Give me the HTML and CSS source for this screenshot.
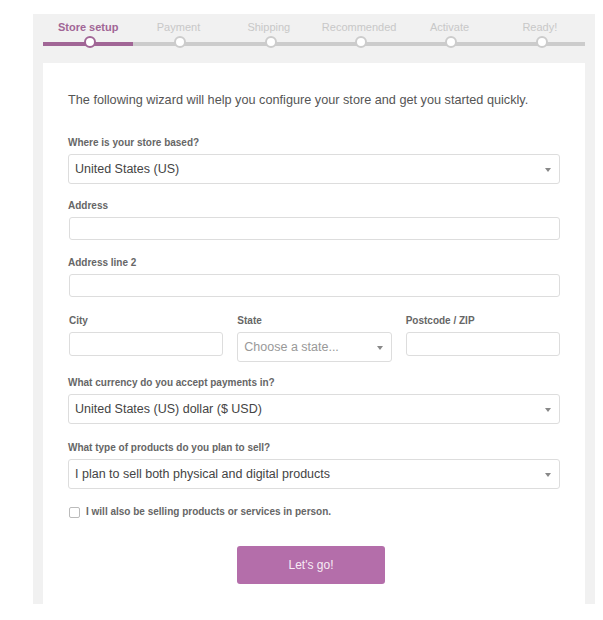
FILE: index.html
```html
<!DOCTYPE html>
<html lang="en">
<head>
<meta charset="utf-8">
<title>Store setup</title>
<link rel="stylesheet" href="styles.css">
</head>
<body>
<div class="setup">
  <ol class="steps">
    <li class="step active">Store setup</li>
    <li class="step">Payment</li>
    <li class="step">Shipping</li>
    <li class="step">Recommended</li>
    <li class="step">Activate</li>
    <li class="step">Ready!</li>
  </ol>
  <div class="card">
    <p class="intro">The following wizard will help you configure your store and get you started quickly.</p>

    <div class="field gap-16">
      <div class="label">Where is your store based?</div>
      <div class="select"><span class="value">United States (US)</span><span class="arrow"></span></div>
    </div>

    <div class="field gap-17">
      <div class="label">Address</div>
      <div class="input"></div>
    </div>

    <div class="field gap-18">
      <div class="label">Address line 2</div>
      <div class="input"></div>
    </div>

    <div class="field row gap-15">
      <div class="col">
        <div class="label">City</div>
        <div class="input short"></div>
      </div>
      <div class="col">
        <div class="label">State</div>
        <div class="select"><span class="value placeholder">Choose a state...</span><span class="arrow"></span></div>
      </div>
      <div class="col">
        <div class="label">Postcode / ZIP</div>
        <div class="input short"></div>
      </div>
    </div>

    <div class="field gap-18">
      <div class="label">What currency do you accept payments in?</div>
      <div class="select"><span class="value">United States (US) dollar ($ USD)</span><span class="arrow"></span></div>
    </div>

    <div class="field gap-17">
      <div class="label">What type of products do you plan to sell?</div>
      <div class="select"><span class="value">I plan to sell both physical and digital products</span><span class="arrow"></span></div>
    </div>

    <label class="check"><span class="box"></span><span class="check-text">I will also be selling products or services in person.</span></label>

    <div class="actions">
      <button class="go" type="button">Let's go!</button>
    </div>
  </div>
</div>
</body>
</html>
```

FILE: styles.css
```css
* { box-sizing: border-box; }

html, body {
  margin: 0;
  padding: 0;
  background: #ffffff;
}

body {
  font-family: "Liberation Sans", Arial, Helvetica, sans-serif;
  color: #555;
}

.setup {
  margin: 14px 0 0 33px;
  width: 562px;
  height: 590px;
  background: #f1f1f1;
  padding: 0 10px;
  display: flex;
  flex-direction: column;
  overflow: hidden;
}

.steps {
  list-style: none;
  margin: 0;
  padding: 0;
  display: grid;
  grid-template-columns: repeat(6, 1fr);
}

.step {
  position: relative;
  text-align: center;
  font-size: 11px;
  line-height: 14px;
  padding: 6px 0 8px;
  color: #c8c8c8;
  border-bottom: 4px solid #cccccc;
}

.step::before {
  content: "";
  position: absolute;
  left: 50%;
  bottom: -6px;
  margin-left: -4px;
  width: 8px;
  height: 8px;
  border: 2.5px solid #cccccc;
  border-radius: 50%;
  background: #ffffff;
}

.step.active {
  color: #a16696;
  font-weight: bold;
  border-bottom-color: #a16696;
}

.step.active::before {
  border-color: #a16696;
}

.card {
  flex: 1;
  margin-top: 17px;
  background: #ffffff;
  padding: 29px 25px 20px;
}

.intro {
  margin: 0 0 29px;
  font-size: 12.7px;
  line-height: 16px;
  color: #555;
}

.field { margin-bottom: 16px; }
.field.gap-15 { margin-bottom: 15px; }
.field.gap-16 { margin-bottom: 16px; }
.field.gap-17 { margin-bottom: 17px; }
.field.gap-18 { margin-bottom: 18px; }

.label {
  font-size: 10px;
  line-height: 12px;
  font-weight: bold;
  color: #666;
  margin-bottom: 5px;
}

.select {
  height: 30px;
  border: 1px solid #dddddd;
  border-radius: 3px;
  background: #ffffff;
  display: flex;
  align-items: center;
  justify-content: space-between;
  padding: 0 8px 0 6px;
}

.value {
  font-size: 12.5px;
  color: #444;
  white-space: nowrap;
}

.value.placeholder {
  color: #999;
}

.arrow {
  width: 0;
  height: 0;
  border-left: 3px solid transparent;
  border-right: 3px solid transparent;
  border-top: 4px solid #888;
  margin-top: 1px;
}

.input {
  height: 23px;
  border: 1px solid #dddddd;
  border-radius: 3px;
  background: #ffffff;
  margin-left: 1px;
}

.input.short {
  height: 24px;
}

.row {
  display: grid;
  grid-template-columns: repeat(3, 1fr);
  column-gap: 13px;
  align-items: start;
}

.row .col .label {
  margin-left: 1px;
}

.row .select {
  padding-left: 6px;
  margin-left: 1px;
}

.check {
  display: flex;
  align-items: center;
  gap: 6px;
  margin-left: 1px;
  height: 12px;
}

.box {
  width: 11px;
  height: 11px;
  border: 1px solid #bbbbbb;
  border-radius: 2px;
  background: #fff;
}

.check-text {
  font-size: 10px;
  font-weight: bold;
  color: #666;
  line-height: 12px;
}

.actions {
  margin-top: 28px;
  padding-left: 169px;
}

.go {
  width: 148px;
  height: 38px;
  border: none;
  border-radius: 3px;
  background: #b46eaa;
  color: #f7ecf5;
  font-family: "Liberation Sans", Arial, sans-serif;
  font-size: 12px;
  padding: 0;
}
```
